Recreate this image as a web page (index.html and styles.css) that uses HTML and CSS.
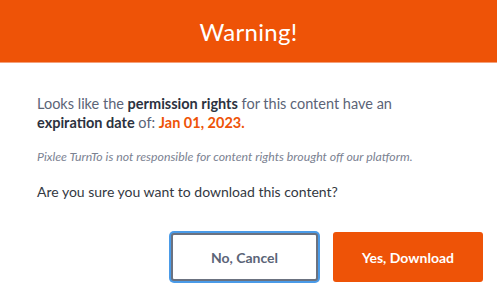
FILE: index.html
```html
<!DOCTYPE html>
<html>
<head>
<meta charset="utf-8">
<link rel="stylesheet" href="styles.css">
</head>
<body>
<div class="modal">
  <header class="modal-header">
    <h1 class="title">Warning!</h1>
  </header>
  <div class="modal-body">
    <p class="lead">Looks like the <strong>permission rights</strong> for this content have an <strong>expiration date</strong> of: <span class="date">Jan 01, 2023.</span></p>
    <p class="note">Pixlee TurnTo is not responsible for content rights brought off our platform.</p>
    <p class="question">Are you sure you want to download this content?</p>
  </div>
  <div class="modal-actions">
    <button class="btn btn-cancel">No, Cancel</button>
    <button class="btn btn-primary">Yes, Download</button>
  </div>
</div>
</body>
</html>
```

FILE: styles.css
```css
html, body {
  margin: 0;
  padding: 0;
  background: #ffffff;
}
body {
  font-family: Lato, "Noto Sans", sans-serif;
  width: 497px;
  height: 296px;
  overflow: hidden;
}
.modal {
  width: 497px;
}
.modal-header {
  background: #ee5307;
  height: 62px;
  border-bottom: 1px solid #f4a07a;
  display: flex;
  align-items: center;
  justify-content: center;
}
.title {
  margin: 0;
  color: #ffffff;
  font-size: 24px;
  font-weight: 400;
  letter-spacing: 0.3px;
}
.modal-body {
  padding: 31px 37px 0 37px;
}
.lead {
  margin: 0;
  font-size: 14.5px;
  line-height: 19px;
  color: #5b6477;
}
.lead strong {
  color: #2c3240;
  font-weight: 700;
}
.date {
  color: #ee5307;
  font-weight: 700;
}
.note {
  margin: 17px 0 0 0;
  font-size: 12.3px;
  line-height: 16px;
  font-style: italic;
  color: #7b8292;
}
.question {
  margin: 17px 0 0 0;
  font-size: 14px;
  line-height: 20px;
  color: #333842;
}
.modal-actions {
  display: flex;
  justify-content: flex-end;
  gap: 15px;
  padding: 30px 14px 0 0;
}
.btn {
  width: 150px;
  height: 50px;
  border-radius: 3px;
  font-family: inherit;
  font-size: 14px;
  font-weight: 700;
  cursor: pointer;
}
.btn-cancel {
  background: #ffffff;
  color: #5b6477;
  border: 2px solid #6b7280;
  box-shadow: 0 0 0 2px #4a9be8;
  width: 147px;
  height: 48px;
  margin-top: 1px;
}
.btn-primary {
  background: #ee5307;
  color: #ffffff;
  border: none;
}
```
